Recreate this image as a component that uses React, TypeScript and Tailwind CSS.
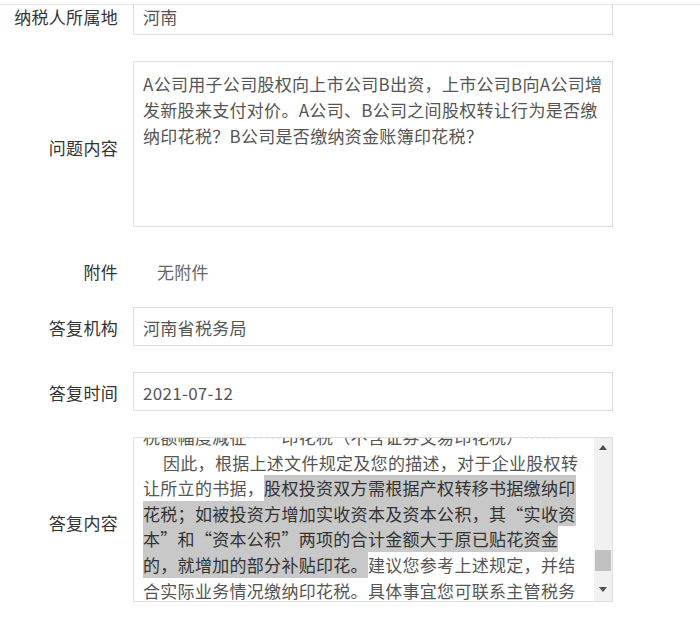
import React from "react";

type Seg = { t: string; h?: boolean };

const questionLines = [
  "A公司用子公司股权向上市公司B出资，上市公司B向A公司增",
  "发新股来支付对价。A公司、B公司之间股权转让行为是否缴",
  "纳印花税？B公司是否缴纳资金账簿印花税？",
];

const answerLines: { segs: Seg[]; indent?: boolean }[] = [
  { segs: [{ t: "税额幅度减征……印花税（不含证券交易印花税）……" }] },
  { segs: [{ t: "因此，根据上述文件规定及您的描述，对于企业股权转" }], indent: true },
  { segs: [{ t: "让所立的书据，" }, { t: "股权投资双方需根据产权转移书据缴纳印", h: true }] },
  { segs: [{ t: "花税；如被投资方增加实收资本及资本公积，其“实收资", h: true }] },
  { segs: [{ t: "本”和“资本公积”两项的合计金额大于原已贴花资金", h: true }] },
  { segs: [{ t: "的，就增加的部分补贴印花。", h: true }, { t: "建议您参考上述规定，并结" }] },
  { segs: [{ t: "合实际业务情况缴纳印花税。具体事宜您可联系主管税务" }] },
  { segs: [{ t: "机关。" }] },
];

function Label({ children, className = "" }: { children: React.ReactNode; className?: string }) {
  return (
    <div className={`w-[118px] shrink-0 text-right text-[17px] tracking-[0.3px] text-[#333333] ${className}`}>
      {children}
    </div>
  );
}

function InputBox({ value }: { value: string }) {
  return (
    <div className="w-[480px] h-[39px] border border-[#dddddd] bg-white px-[9px] flex items-center">
      <span className="text-[17px] tracking-[0.3px] text-[#555555] pt-[2px]">{value}</span>
    </div>
  );
}

function Arrow({ up }: { up?: boolean }) {
  return (
    <svg width="8" height="5" viewBox="0 0 8 5">
      {up ? <polygon points="0,5 8,5 4,0" fill="#505050" /> : <polygon points="0,0 8,0 4,5" fill="#505050" />}
    </svg>
  );
}

export default function App() {
  return (
    <div className="relative h-[639px] w-[700px] overflow-hidden bg-white font-['Noto_Sans_CJK_SC','Microsoft_YaHei',sans-serif]">
      <div className="-mt-[4px] flex flex-col gap-[26px]">
        {/* 纳税人所属地 */}
        <div className="flex items-center gap-[15px]">
          <Label className="pt-[3px]">纳税人所属地</Label>
          <InputBox value="河南" />
        </div>

        {/* 问题内容 */}
        <div className="flex items-center gap-[15px]">
          <Label className="pt-[8px]">问题内容</Label>
          <div className="w-[480px] h-[166px] border border-[#dddddd] bg-white pt-[9px] px-[9px] text-[17px] tracking-[0.3px] leading-[26px] text-[#555555]">
            {questionLines.map((l, i) => (
              <div key={i} className="whitespace-nowrap">
                {l}
              </div>
            ))}
          </div>
        </div>

        {/* 附件 */}
        <div className="flex items-center gap-[15px] h-[28px] pt-[10px]">
          <Label>附件</Label>
          <div className="pl-[24px] text-[17px] tracking-[0.3px] text-[#666666]">无附件</div>
        </div>

        {/* 答复机构 */}
        <div className="flex items-center gap-[15px]">
          <Label className="pt-[3px]">答复机构</Label>
          <InputBox value="河南省税务局" />
        </div>

        {/* 答复时间 */}
        <div className="flex items-center gap-[15px]">
          <Label className="pt-[3px]">答复时间</Label>
          <InputBox value="2021-07-12" />
        </div>

        {/* 答复内容 */}
        <div className="flex items-center gap-[15px]">
          <Label className="pt-[7px]">答复内容</Label>
          <div className="w-[480px] h-[165px] border border-[#dddddd] bg-white flex overflow-hidden">
            <div className="flex-1 overflow-hidden pl-[9px] pr-[6px]">
              <div className="-mt-[14px] text-[17px] tracking-[0.3px] leading-[25.6px] text-[#555555]">
                {answerLines.map((line, i) => (
                  <div key={i} className={`whitespace-nowrap h-[25.6px] ${line.indent ? "pl-[20px]" : ""}`}>
                    {line.segs.map((s, j) =>
                      s.h ? (
                        <span key={j} className="inline-block leading-[25.6px] bg-[#c8c8c8] text-[#333333]">
                          {s.t}
                        </span>
                      ) : (
                        <span key={j}>{s.t}</span>
                      )
                    )}
                  </div>
                ))}
              </div>
            </div>
            <div className="w-[18px] shrink-0 bg-[#f1f1f1] flex flex-col">
              <div className="h-[18px] flex items-center justify-center">
                <Arrow up />
              </div>
              <div className="flex-1">
                <div className="mt-[94px] mx-[1px] h-[21px] bg-[#c1c1c1]" />
              </div>
              <div className="h-[24px] flex items-center justify-center">
                <Arrow />
              </div>
            </div>
          </div>
        </div>
      </div>

      {/* top header edge overlaying the scrolled content */}
      <div className="absolute top-0 left-0 right-0 h-[5px] bg-white border-b border-[#e6e6e6]" />
    </div>
  );
}
